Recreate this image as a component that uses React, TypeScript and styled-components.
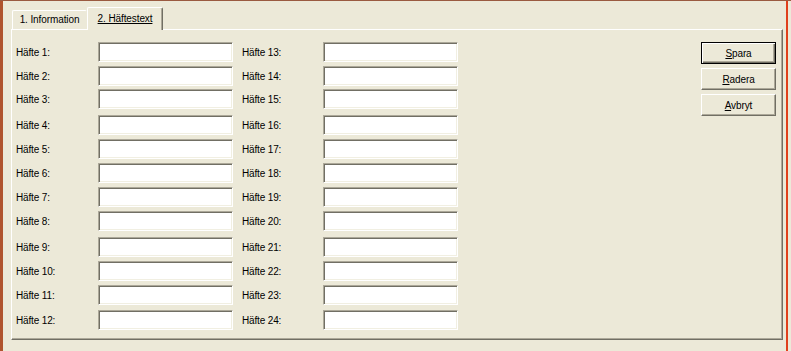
import React from "react";
import styled, { createGlobalStyle } from "styled-components";

const Global = createGlobalStyle`
  html, body { margin: 0; padding: 0; background: #ECE9D8; }
  * { box-sizing: border-box; }
  body { font-family: "Liberation Sans", Arial, sans-serif; font-size: 10px; color: #000; }
`;

const Page = styled.div`
  width: 791px;
  height: 351px;
  background: #ECE9D8;
  border-top: 1px solid #9a5a40;
  padding-right: 3px;
  display: flex;
`;

const Window = styled.div`
  flex: 1;
  border-left: 3px solid #b0542e;
  border-right: 2px solid #e0401c;
  padding: 6px 3px 0 8px;
  display: flex;
  flex-direction: column;
`;

const TabRow = styled.div`
  height: 22px;
  display: flex;
  align-items: flex-end;
  padding-left: 1px;
`;

const Tab = styled.div<{ $active?: boolean }>`
  position: relative;
  z-index: ${(p) => (p.$active ? 2 : 1)};
  width: ${(p) => (p.$active ? 76 : 75)}px;
  height: ${(p) => (p.$active ? 23 : 19)}px;
  margin-bottom: ${(p) => (p.$active ? -1 : 0)}px;
  background: #ECE9D8;
  border-top: 1px solid #fff;
  border-left: 1px solid #fff;
  border-right: 1px solid ${(p) => (p.$active ? "#716F64" : "#ECE9D8")};
  box-shadow: ${(p) => (p.$active ? "inset -1px 0 0 #ACA899" : "none")};
  border-radius: 2px 2px 0 0;
  display: flex;
  justify-content: center;
  padding-top: ${(p) => (p.$active ? 5 : 3)}px;
  letter-spacing: -0.1px;
  text-decoration: ${(p) => (p.$active ? "underline" : "none")};
`;

const Pane = styled.div`
  height: 311px;
  border-top: 1px solid #fff;
  border-left: 1px solid #fff;
  border-right: 1px solid #716F64;
  border-bottom: 1px solid #716F64;
  box-shadow: inset -1px -1px 0 #ACA899;
  padding: 12px 6px 0 4px;
  display: flex;
  justify-content: space-between;
  align-items: flex-start;
`;

const Fields = styled.div`
  display: flex;
  flex-direction: column;
`;

const Row = styled.div<{ $gap: number }>`
  margin-top: ${(p) => p.$gap}px;
  display: grid;
  grid-template-columns: 82px 135px 90px 135px;
  align-items: center;
  height: 20px;
`;

const Label = styled.label<{ $indent?: number }>`
  padding-left: ${(p) => p.$indent ?? 0}px;
  letter-spacing: -0.15px;
  white-space: nowrap;
`;

const Field = styled.input`
  width: 135px;
  height: 20px;
  margin: 0;
  background: #fff;
  border-style: solid;
  border-width: 1px;
  border-color: #ACA899 #fff #fff #ACA899;
  box-shadow: inset 1px 1px 0 #716F64, inset -1px -1px 0 #F1EFE2;
  outline: none;
  font: inherit;
  padding: 0 3px;
`;

const Buttons = styled.div`
  display: flex;
  flex-direction: column;
  gap: 4px;
`;

const Button = styled.button<{ $default?: boolean }>`
  width: 75px;
  height: 22px;
  margin: 0;
  padding: 0;
  font: inherit;
  letter-spacing: -0.1px;
  color: #000;
  background: #ECE9D8;
  border: 1px solid ${(p) => (p.$default ? "#000" : "transparent")};
  box-shadow: ${(p) =>
    p.$default
      ? "inset 1px 1px 0 #fff, inset -1px -1px 0 #716F64, inset -2px -2px 0 #ACA899"
      : "inset 1px 1px 0 #fff, inset -1px -1px 0 #716F64, inset -2px -2px 0 #ACA899"};
  ${(p) =>
    p.$default
      ? ""
      : "border-color: #fff #716F64 #716F64 #fff; box-shadow: inset -1px -1px 0 #ACA899;"}
`;

const gaps = [0, 4, 3, 6, 4, 4, 4, 4, 6, 4, 4, 5];

export default function App() {
  return (
    <>
      <Global />
      <Page>
        <Window>
          <TabRow>
            <Tab>1. Information</Tab>
            <Tab $active>2. Häftestext</Tab>
          </TabRow>
          <Pane>
            <Fields>
              {gaps.map((g, i) => (
                <Row key={i} $gap={g}>
                  <Label>Häfte {i + 1}:</Label>
                  <Field />
                  <Label $indent={9}>Häfte {i + 13}:</Label>
                  <Field />
                </Row>
              ))}
            </Fields>
            <Buttons>
              <Button $default>
                <u>S</u>para
              </Button>
              <Button>
                <u>R</u>adera
              </Button>
              <Button>
                <u>A</u>vbryt
              </Button>
            </Buttons>
          </Pane>
        </Window>
      </Page>
    </>
  );
}
